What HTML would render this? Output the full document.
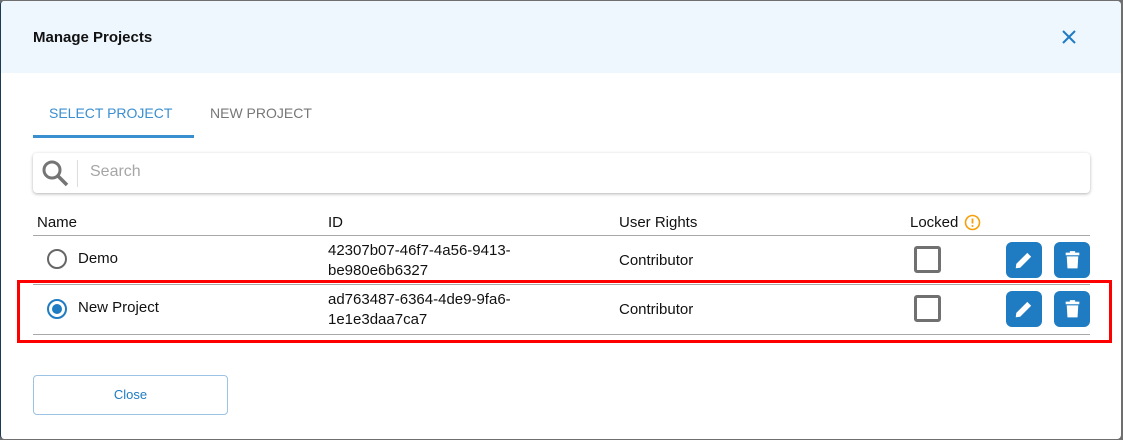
<!DOCTYPE html>
<html><head><style>
*{box-sizing:border-box;margin:0;padding:0}
body{width:1123px;height:440px;background:#6f6f6f;font-family:"Liberation Sans",sans-serif;position:relative;overflow:hidden}
.dlg{position:absolute;left:0;top:1px;width:1121px;height:438px;background:#fff;border-radius:4px;overflow:hidden;border-left:1px solid #1d3a55}
.a{position:absolute;white-space:nowrap}
.hdr{position:absolute;left:0;top:0;width:1120px;height:72px;background:#eef6fe}
.th{font-size:15px;color:#111;top:213px}
.td{font-size:15px;color:#111}
.line{position:absolute;left:32px;width:1057px;height:1px;background:#a8a8a8}
.cb{position:absolute;width:27px;height:27px;border:3px solid #707070;border-radius:3px}
.btn{position:absolute;width:36px;height:36px;background:#1f7cc2;border-radius:6px}
.rad{position:absolute;width:20px;height:20px;border-radius:50%;border:2px solid #666}
</style></head><body>
<div class="dlg">
<div class="hdr"></div>
<div class="a" style="left:32px;top:28px;font-size:15px;font-weight:bold;color:#111">Manage Projects</div>
<svg class="a" style="left:1060px;top:28px" width="16" height="16" viewBox="0 0 16 16"><path d="M2 2L14 14M14 2L2 14" stroke="#1f7cc2" stroke-width="2"/></svg>
<div class="a" style="left:48px;top:104px;font-size:14px;color:#3a8fd0">SELECT PROJECT</div>
<div class="a" style="left:209px;top:104px;font-size:14px;color:#777">NEW PROJECT</div>
<div class="a" style="left:32px;top:134px;width:161px;height:3px;background:#3a8fd0"></div>
<div class="a" style="left:32px;top:152px;width:1057px;height:40px;border-radius:4px;box-shadow:0 1px 3px rgba(0,0,0,.3)"></div>
<svg class="a" style="left:40px;top:158px" width="28" height="28" viewBox="0 0 28 28"><circle cx="11" cy="11" r="8" fill="none" stroke="#757575" stroke-width="3"/><path d="M17 17L26 26" stroke="#757575" stroke-width="3.5"/></svg>
<div class="a" style="left:76px;top:159px;width:1px;height:27px;background:#ddd"></div>
<div class="a" style="left:89px;top:162px;font-size:16px;color:#a6a6a6">Search</div>
<div class="a th" style="left:36px">Name</div>
<div class="a th" style="left:327px">ID</div>
<div class="a th" style="left:618px">User Rights</div>
<div class="a th" style="left:909px">Locked</div>
<svg class="a" style="left:963px;top:213px" width="17" height="17" viewBox="0 0 17 17"><circle cx="8.5" cy="8.5" r="7" fill="none" stroke="#f5a00a" stroke-width="1.6"/><path d="M8.5 4.5V9.5" stroke="#f5a00a" stroke-width="1.8"/><circle cx="8.5" cy="12" r="1" fill="#f5a00a"/></svg>
<div class="line" style="top:234px"></div>
<div class="rad" style="left:46px;top:248px"></div>
<div class="a td" style="left:77px;top:249px">Demo</div>
<div class="a td" style="left:327px;top:240px;line-height:20px">42307b07-46f7-4a56-9413-<br>be980e6b6327</div>
<div class="a td" style="left:618px;top:251px">Contributor</div>
<div class="cb" style="left:913px;top:245px"></div>
<div class="btn" style="left:1005px;top:241px"></div>
<div class="btn" style="left:1053px;top:241px"></div>
<div class="line" style="top:283px"></div>
<div class="rad" style="left:46px;top:298px;border-color:#1f7cc2"><div style="position:absolute;left:3px;top:3px;width:10px;height:10px;border-radius:50%;background:#1f7cc2"></div></div>
<div class="a td" style="left:77px;top:298px">New Project</div>
<div class="a td" style="left:327px;top:289px;line-height:20px">ad763487-6364-4de9-9fa6-<br>1e1e3daa7ca7</div>
<div class="a td" style="left:618px;top:300px">Contributor</div>
<div class="cb" style="left:913px;top:294px"></div>
<div class="btn" style="left:1005px;top:290px"></div>
<div class="btn" style="left:1053px;top:290px"></div>
<div class="line" style="top:333px"></div>
<svg class="a" style="left:1012px;top:248px" width="22" height="22" viewBox="0 0 20 20"><path d="M2.5 17.5L3 13.5L13 3.5L16.5 7L6.5 17Z" fill="#fff"/></svg>
<svg class="a" style="left:1012px;top:297px" width="22" height="22" viewBox="0 0 20 20"><path d="M2.5 17.5L3 13.5L13 3.5L16.5 7L6.5 17Z" fill="#fff"/></svg>
<svg class="a" style="left:1061px;top:248px" width="21" height="21" viewBox="0 0 20 20"><path d="M3.5 3.5H16.5V6H3.5ZM7.5 2H12.5V3.5H7.5ZM4.5 7H15.5L14.8 18.5H5.2Z" fill="#fff"/></svg>
<svg class="a" style="left:1061px;top:297px" width="21" height="21" viewBox="0 0 20 20"><path d="M3.5 3.5H16.5V6H3.5ZM7.5 2H12.5V3.5H7.5ZM4.5 7H15.5L14.8 18.5H5.2Z" fill="#fff"/></svg>
<div class="a" style="left:16px;top:279px;width:1095px;height:63px;border:3px solid #f00"></div>
<div class="a" style="left:32px;top:374px;width:195px;height:40px;border:1px solid #9cc3e3;border-radius:4px;color:#1f7cc2;font-size:13px;text-align:center;line-height:38px">Close</div>
</div>
</body></html>
